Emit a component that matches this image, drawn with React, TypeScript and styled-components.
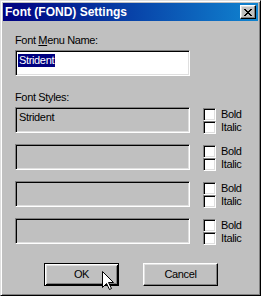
import styled, { createGlobalStyle } from "styled-components";

const GlobalStyle = createGlobalStyle`
  html, body {
    margin: 0;
    padding: 0;
    background: #c0c0c0;
  }
  body {
    font-family: "Liberation Sans", Arial, sans-serif;
    font-size: 11px;
    color: #000;
  }
`;

const styleRows = ["Strident", "", "", ""];

export default function App() {
  return (
    <>
      <GlobalStyle />
      <Window>
        <TitleBar>
          <Title>Font (FOND) Settings</Title>
          <CloseButton aria-label="Close">
            <svg width="8" height="7" viewBox="0 0 8 7" shapeRendering="crispEdges">
              <path
                fill="#000"
                d="M0 0h2v1H0zM6 0h2v1H6zM1 1h2v1H1zM5 1h2v1H5zM2 2h4v1H2zM3 3h2v1H3zM2 4h4v1H2zM1 5h2v1H1zM5 5h2v1H5zM0 6h2v1H0zM6 6h2v1H6z"
              />
            </svg>
          </CloseButton>
        </TitleBar>
        <Body>
          <Label>
            Font <u>M</u>enu Name:
          </Label>
          <Field>
            <Selected>Strident</Selected>
          </Field>
          <Label $top={15}>Font Styles:</Label>
          <StyleList>
            {styleRows.map((name, i) => (
              <StyleRow key={i}>
                <StyleBox>{name}</StyleBox>
                <Options>
                  <Option>
                    <Check />
                    <span>Bold</span>
                  </Option>
                  <Option>
                    <Check />
                    <span>Italic</span>
                  </Option>
                </Options>
              </StyleRow>
            ))}
          </StyleList>
          <ButtonRow>
            <Button $default>OK</Button>
            <Button>Cancel</Button>
          </ButtonRow>
        </Body>
        <Cursor width="12" height="20" viewBox="0 0 12 20">
          <path
            d="M0.5 0.5 L0.5 16.5 L4.5 12.5 L7.5 18.5 L9.5 17.5 L6.5 11.5 L11.5 11.5 Z"
            fill="#fff"
            stroke="#000"
            strokeWidth="1"
            strokeLinejoin="miter"
          />
        </Cursor>
      </Window>
    </>
  );
}

const Window = styled.div`
  position: relative;
  box-sizing: border-box;
  width: 261px;
  height: 296px;
  padding: 2px;
  background: #c0c0c0;
  border: 1px solid;
  border-color: #dfdfdf #000 #000 #dfdfdf;
  box-shadow: inset 1px 1px #fff, inset -1px -1px #808080;
  display: flex;
  flex-direction: column;
`;

const TitleBar = styled.div`
  height: 18px;
  display: flex;
  align-items: center;
  justify-content: space-between;
  padding: 0 2px 0 2px;
  background: linear-gradient(90deg, #000080, #1084d0);
`;

const Title = styled.span`
  color: #fff;
  font-weight: bold;
  font-size: 12px;
  line-height: 18px;
  white-space: nowrap;
`;

const CloseButton = styled.div`
  box-sizing: border-box;
  width: 16px;
  height: 14px;
  display: flex;
  align-items: center;
  justify-content: center;
  background: #c0c0c0;
  border: 1px solid;
  border-color: #fff #000 #000 #fff;
  box-shadow: inset -1px -1px #808080, inset 1px 1px #dfdfdf;
  svg {
    display: block;
  }
`;

const Body = styled.div`
  display: flex;
  flex-direction: column;
  padding: 13px 0 0 12px;
  letter-spacing: -0.35px;
`;

const Label = styled.div<{ $top?: number }>`
  line-height: 13px;
  margin-top: ${(p) => p.$top ?? 0}px;
  u {
    text-decoration: underline;
    text-underline-offset: 1px;
  }
`;

const sunken = `
  box-sizing: border-box;
  border: 1px solid;
  border-color: #808080 #fff #fff #808080;
  box-shadow: inset 1px 1px #000, inset -1px -1px #dfdfdf;
`;

const Field = styled.div`
  ${sunken}
  width: 175px;
  height: 26px;
  margin-top: 3px;
  padding: 3px 0 0 2px;
  background: #fff;
  line-height: 13px;
`;

const Selected = styled.span`
  display: inline-block;
  background: #000080;
  color: #fff;
  padding: 0 1px;
`;

const StyleList = styled.div`
  display: flex;
  flex-direction: column;
  gap: 10px;
  margin-top: 3px;
`;

const StyleRow = styled.div`
  display: flex;
  align-items: flex-start;
`;

const StyleBox = styled.div`
  ${sunken}
  width: 175px;
  height: 26px;
  padding: 3px 0 0 3px;
  line-height: 13px;
`;

const Options = styled.div`
  display: flex;
  flex-direction: column;
  margin: 1px 0 0 13px;
`;

const Option = styled.label`
  display: flex;
  align-items: center;
  gap: 5px;
  height: 13px;
  line-height: 13px;
`;

const Check = styled.span`
  ${sunken}
  display: block;
  width: 13px;
  height: 13px;
  background: #fff;
`;

const ButtonRow = styled.div`
  display: flex;
  gap: 24px;
  margin: 18px 0 0 29px;
`;

const Button = styled.div<{ $default?: boolean }>`
  box-sizing: border-box;
  width: 75px;
  height: 23px;
  display: flex;
  align-items: center;
  justify-content: center;
  background: #c0c0c0;
  line-height: 13px;
  border: 1px solid;
  border-color: ${(p) => (p.$default ? "#000" : "#fff #000 #000 #fff")};
  box-shadow: ${(p) =>
    p.$default
      ? "inset 1px 1px #fff, inset -1px -1px #000, inset 2px 2px #dfdfdf, inset -2px -2px #808080"
      : "inset -1px -1px #808080, inset 1px 1px #dfdfdf"};
`;

const Cursor = styled.svg`
  position: absolute;
  left: 101px;
  top: 270px;
  display: block;
`;
